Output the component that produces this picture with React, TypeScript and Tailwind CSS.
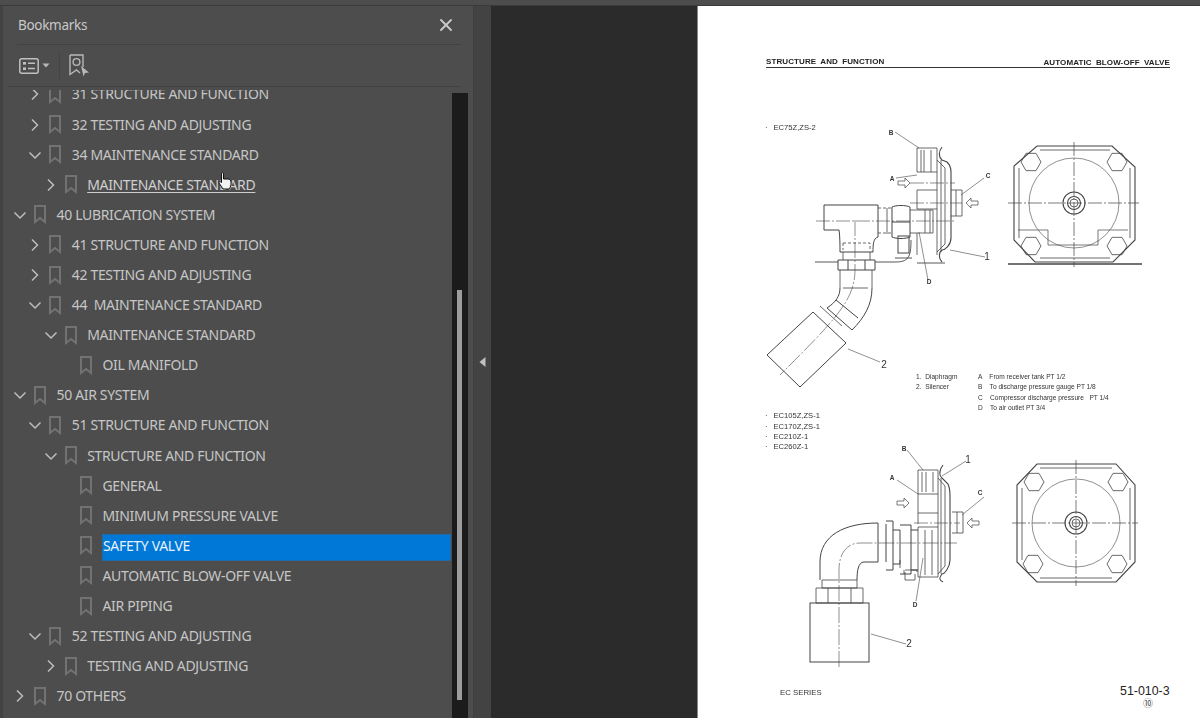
import { X } from "lucide-react";

type Row = { label: string; level: 0 | 1 | 2 | 3; chevron?: "right" | "down"; hover?: boolean; selected?: boolean };

const rows: Row[] = [
  { label: "31 STRUCTURE AND FUNCTION", level: 1, chevron: "right" },
  { label: "32 TESTING AND ADJUSTING", level: 1, chevron: "right" },
  { label: "34 MAINTENANCE STANDARD", level: 1, chevron: "down" },
  { label: "MAINTENANCE STANDARD", level: 2, chevron: "right", hover: true },
  { label: "40 LUBRICATION SYSTEM", level: 0, chevron: "down" },
  { label: "41 STRUCTURE AND FUNCTION", level: 1, chevron: "right" },
  { label: "42 TESTING AND ADJUSTING", level: 1, chevron: "right" },
  { label: "44  MAINTENANCE STANDARD", level: 1, chevron: "down" },
  { label: "MAINTENANCE STANDARD", level: 2, chevron: "down" },
  { label: "OIL MANIFOLD", level: 3 },
  { label: "50 AIR SYSTEM", level: 0, chevron: "down" },
  { label: "51 STRUCTURE AND FUNCTION", level: 1, chevron: "down" },
  { label: "STRUCTURE AND FUNCTION", level: 2, chevron: "down" },
  { label: "GENERAL", level: 3 },
  { label: "MINIMUM PRESSURE VALVE", level: 3 },
  { label: "SAFETY VALVE", level: 3, selected: true },
  { label: "AUTOMATIC BLOW-OFF VALVE", level: 3 },
  { label: "AIR PIPING", level: 3 },
  { label: "52 TESTING AND ADJUSTING", level: 1, chevron: "down" },
  { label: "TESTING AND ADJUSTING", level: 2, chevron: "right" },
  { label: "70 OTHERS", level: 0, chevron: "right" },
];

const indent = ["pl-[9px]", "pl-[24.3px]", "pl-[39.7px]", "pl-[55px]"];

function Chevron({ dir }: { dir?: "right" | "down" }) {
  return (
    <svg width="16" height="16" viewBox="0 0 16 16" fill="none" stroke="#bdbdbd" strokeWidth="1.5" className="shrink-0">
      {dir === "right" && <path d="M5 2.5 L10.5 8 L5 13.5" />}
      {dir === "down" && <path d="M2.5 5.5 L8 11 L13.5 5.5" />}
    </svg>
  );
}

function BookmarkIcon() {
  return (
    <svg width="12" height="19" viewBox="0 0 12 19" fill="none" stroke="#727272" strokeWidth="2" className="ml-[6px] mr-[10px] shrink-0">
      <path d="M1 1 H11 V17 L6 13 L1 17 Z" />
    </svg>
  );
}

function TreeRow({ row }: { row: Row }) {
  return (
    <div className={`flex h-[30.1px] items-center whitespace-pre ${indent[row.level]}`}>
      <Chevron dir={row.chevron} />
      <BookmarkIcon />
      <span
        className={
          row.selected
            ? "mt-[3px] flex h-[27px] w-[349px] items-center border border-dotted border-[#3d5d78] bg-[#0078d7] pb-[3px] text-[#e6f1fa]"
            : row.hover
              ? "pl-[0.5px] text-[#cfcfcf] underline underline-offset-2"
              : "pl-[0.5px] text-[#c6c6c6]"
        }
      >
        {row.label}
      </span>
    </div>
  );
}

function Hex({ x, y, r = 10 }: { x: number; y: number; r?: number }) {
  const pts = [0, 60, 120, 180, 240, 300]
    .map((a) => `${x + r * Math.cos((a * Math.PI) / 180)},${y + r * Math.sin((a * Math.PI) / 180)}`)
    .join(" ");
  return <polygon points={pts} />;
}

function Arrow({ x, y, dir }: { x: number; y: number; dir: 1 | -1 }) {
  const p = (dx: number, dy: number) => `${x + dx * dir},${y + dy}`;
  return <polygon points={[p(-6, -2), p(1, -2), p(1, -5), p(6, 0), p(1, 5), p(1, 2), p(-6, 2)].join(" ")} strokeWidth="0.7" />;
}

function Drawing() {
  return (
    <svg width="502" height="718" viewBox="698 0 502 718" fill="none" stroke="#444" strokeWidth="0.8" className="absolute inset-0 blur-[0.4px]">
      {/* top plan view */}
      <polygon points="1037,146 1112,146 1135,167 1135,240 1113,262 1035,262 1014,240 1014,166" strokeWidth="1.1" />
      <path d="M1019 168 V238 M1130 168 V238 M1040 150 H1110 M1040 258 H1110" />
      <circle cx="1074" cy="203" r="45" strokeWidth="0.6" />
      <circle cx="1074" cy="203" r="11" strokeWidth="1.1" />
      <circle cx="1074" cy="203" r="6.5" strokeWidth="1.1" />
      <circle cx="1074" cy="203" r="4" />
      <Hex x={1031} y={162} />
      <Hex x={1117} y={162} />
      <Hex x={1031} y={246} />
      <Hex x={1117} y={246} />
      <path d="M1018 230 H1048 V245 H1098 V230 H1128" strokeWidth="0.7" />
      <path d="M1008 203 H1139 M1074 142 V267" strokeDasharray="14 2 2 2" strokeWidth="0.7" />
      <path d="M1008 264 H1142" strokeWidth="1.3" />

      {/* top side view */}
      <path d="M917 148 V172 M917 190 V209 M917 233 V255 M917 148 H937 M937 148 V255 M921 150 V172 M924 150 V172 M931 150 V172 M917 172 H937 M917 190 H937 M917 209 H937 M925 210 V233 M930 210 V233" />
      <path d="M942 147 C938 152 939 158 942 160 L947 162 C950 165 951 168 951 172 L951 238 C951 245 945 250 942 250 C939 252 938 258 942 262" strokeWidth="1.1" />
      <path d="M937 160 L945 168 L945 244 L937 252 M941 160 V252 M951 190 H962 V216 H951 M956 190 V216" />
      <path d="M824 205 H878 V237 C873 238 873 246 873 252 H840 C840 246 840 236 839 230 H824 Z" strokeWidth="1" />
      <path d="M878 208 H891 M878 233 H891" strokeDasharray="3 2" />
      <path d="M892 207 C896 205 906 205 910 207 V237 C906 239 896 239 892 237 Z M892 222 H910" strokeWidth="1" />
      <path d="M887 208 V234 M910 210 H933 V233 H910" />
      <path d="M843 243 H870 V250 M843 243 V250" strokeDasharray="3 2" />
      <path d="M843 252 V260 M870 252 V260" />
      <path d="M838 260 H875 L875 270 H838 Z M848 260 V270 M865 260 V270" strokeWidth="1" />
      <path d="M840 270 V288 M872 270 V288 M843 288 H868" />
      <path d="M840 288 C840 296 836 302 827 308 M872 288 C872 305 864 318 852 330 M827 308 L852 330 M836 300 L858 318" strokeWidth="1" />
      <path d="M813 312 L846 343 L800 387 L767 355 Z" strokeWidth="1" />
      <path d="M820 306 L842 326" />
      <path d="M855 220 V270 C855 300 835 320 780 375" strokeDasharray="16 2 2 2" strokeWidth="0.6" />
      <path d="M816 221 H955 M910 183 H955 M910 203 H962" strokeDasharray="14 2 2 2" strokeWidth="0.6" />
      <path d="M815 262 H838 M875 262 H895 C908 262 911 258 911 240 M895 258 H912 M917 263 H945" strokeWidth="0.9" />
      <rect x="898" y="236" width="11" height="17" strokeWidth="1" />
      <path d="M895 132 L919 148 M896 178 L917 175 M984 178 L961 195 M928 280 L919 232 M985 257 L950 250 M848 349 L880 362" strokeWidth="0.6" />
      <Arrow x={904} y={183} dir={1} />
      <Arrow x={972} y={203} dir={-1} />

      {/* bottom plan view */}
      <polygon points="1037,464 1116,464 1135,485 1135,562 1116,582 1037,582 1017,562 1017,485" strokeWidth="1.1" />
      <path d="M1022 488 V560 M1130 488 V560 M1040 468 H1112 M1040 578 H1112" />
      <circle cx="1076" cy="523" r="44" strokeWidth="0.6" />
      <circle cx="1076" cy="523" r="11" strokeWidth="1.1" />
      <circle cx="1076" cy="523" r="6.5" strokeWidth="1.1" />
      <circle cx="1076" cy="523" r="4" />
      <Hex x={1034} y={482} />
      <Hex x={1118} y={482} />
      <Hex x={1033} y={564} />
      <Hex x={1117} y={564} />
      <path d="M1012 523 H1138 M1076 460 V586" strokeDasharray="14 2 2 2" strokeWidth="0.7" />

      {/* bottom side view */}
      <path d="M918 470 H938 V577 H918 V527 M918 470 V524 M922 472 V492 M926 472 V492 M933 472 V492 M918 494 H938 M918 513 H938 M918 527 H938 M925 530 V575 M932 530 V575" />
      <path d="M943 465 C939 470 939 476 942 478 L948 484 C950 488 950 492 950 496 L950 560 C950 568 944 574 942 574 C939 578 939 580 943 582" strokeWidth="1.1" />
      <path d="M938 478 L945 486 L945 566 L938 574 M941 478 V574 M952 512 H963 V533 H952 M957 512 V533" />
      <path d="M878 523 C845 523 820 535 820 562 V580 M878 562 H864 C858 562 857 572 857 580" strokeWidth="1" />
      <path d="M878 523 V562 M886 524 V562 M886 521 H893 V570 H886 M893 530 H900 V564 H893 M900 525 H911 V574 H900 M911 530 H918 M911 570 H918" strokeWidth="1" />
      <path d="M900 560 V568 M905 570 H917 V572 M904 574 V570 M905 572 V580 H915 V574" />
      <path d="M822 580 H857 V588 H822 Z" />
      <path d="M816 588 H863 V603 H816 Z M828 588 V603 M851 588 V603" />
      <rect x="810" y="603" width="59" height="59" strokeWidth="1" />
      <path d="M839 667 V570 C839 552 848 543 860 543 H957" strokeDasharray="16 2 2 2" strokeWidth="0.6" />
      <path d="M914 523 H960" strokeDasharray="14 2 2 2" strokeWidth="0.6" />
      <path d="M907 450 L923 470 M897 480 L918 494 M984 497 L962 515 M916 601 L923 558 M966 461 L942 476 M871 634 L906 644" strokeWidth="0.6" />
      <Arrow x={903} y={503} dir={1} />
      <Arrow x={973} y={523} dir={-1} />

      <g fill="#333" stroke="none" fontFamily="Liberation Sans, sans-serif" fontWeight="700" fontSize="6.5" textAnchor="middle">
        <text x="891" y="135">B</text>
        <text x="892" y="181">A</text>
        <text x="988" y="178">C</text>
        <text x="929" y="284">D</text>
        <text x="904" y="451">B</text>
        <text x="892" y="480">A</text>
        <text x="980" y="495">C</text>
        <text x="915" y="607">D</text>
      </g>
      <g fill="#333" stroke="none" fontFamily="Liberation Sans, sans-serif" fontSize="10" textAnchor="middle">
        <text x="987" y="260">1</text>
        <text x="884" y="368">2</text>
        <text x="968" y="463">1</text>
        <text x="909" y="647">2</text>
      </g>
    </svg>
  );
}

const legend = [
  { cls: "left-[916px] top-[373px]", text: "1.  Diaphragm" },
  { cls: "left-[916px] top-[383px]", text: "2.  Silencer" },
  { cls: "left-[978px] top-[373px]", text: "A    From receiver tank PT 1/2" },
  { cls: "left-[978px] top-[383px]", text: "B    To discharge pressure gauge PT 1/8" },
  { cls: "left-[978px] top-[393.5px]", text: "C    Compressor discharge pressure   PT 1/4" },
  { cls: "left-[978px] top-[404px]", text: "D    To air outlet PT 3/4" },
];

const models = [
  { cls: "top-[124px]", text: "EC75Z,ZS-2" },
  { cls: "top-[412px]", text: "EC105Z,ZS-1" },
  { cls: "top-[423px]", text: "EC170Z,ZS-1" },
  { cls: "top-[433px]", text: "EC210Z-1" },
  { cls: "top-[443px]", text: "EC260Z-1" },
];

export default function App() {
  return (
    <div className="flex h-[718px] w-[1200px] flex-col overflow-hidden bg-[#4a4a4a] font-['Noto_Sans',sans-serif]">
      <div className="relative z-10 h-[6px] shrink-0 border-b border-[#3a3a3a] bg-[#4d4d4d]" />
      <div className="relative flex min-h-0 flex-1">
        {/* bookmarks panel */}
        <aside className="relative flex w-[473px] shrink-0 flex-col border-l-[3px] border-[#434343] bg-[#4d4d4d]">
          <div className="ml-[14px] mr-[12px] flex h-[39px] shrink-0 items-center justify-between border-b border-[#424242] pl-px">
            <span className="text-[13.5px] tracking-[-0.3px] text-[#c8c8c8]">Bookmarks</span>
            <X size={20} strokeWidth={2.3} className="mr-[5px] text-[#c8c8c8]" />
          </div>
          <div className="ml-[5px] mr-[12px] flex h-[42px] shrink-0 items-center border-b border-[#424242] pl-[11px]">
            <svg width="20" height="16" viewBox="0 0 20 16" fill="none" stroke="#c0c0c0" strokeWidth="1.5">
              <rect x="0.8" y="0.8" width="18.4" height="14.4" rx="2" />
              <rect x="4" y="4" width="3" height="2.6" fill="#c0c0c0" stroke="none" />
              <rect x="4" y="9.4" width="3" height="2.6" fill="#c0c0c0" stroke="none" />
              <path d="M9 5.2 H16 M9 10.6 H16" />
            </svg>
            <svg width="8" height="5" viewBox="0 0 8 5" className="ml-[3px]">
              <path d="M0.5 0.5 H7.5 L4 4.5 Z" fill="#b8b8b8" />
            </svg>
            <div className="ml-[9px] h-[27px] w-px bg-[#444444]" />
            <svg width="21" height="23" viewBox="0 0 21 23" fill="none" stroke="#b8b8b8" strokeWidth="1.4" className="ml-[9px]">
              <path d="M1 1 H14 V13 M1 1 V20.5 L7.5 16 L11 19" />
              <circle cx="7.5" cy="8" r="3.4" />
              <path d="M12 12 L20 18.5 L16 19 L14.5 22.5 Z" fill="#b8b8b8" stroke="none" />
            </svg>
          </div>
          <div className="relative mt-[3px] min-h-0 flex-1">
            <div className="h-full overflow-hidden">
              <div className="mt-[-10.6px] text-[14px] leading-none tracking-[-0.34px]">
                {rows.map((row, i) => (
                  <TreeRow key={i} row={row} />
                ))}
              </div>
            </div>
            {/* scrollbar */}
            <div className="absolute bottom-0 left-[449px] top-[3px] w-[16px] bg-[#1b1b1b]">
              <div className="absolute left-[5px] top-[197px] h-[410px] w-[5px] bg-[#9c9c9c]" />
            </div>
            {/* hand cursor */}
            <svg width="14" height="18" viewBox="0 0 14 18" className="absolute left-[215px] top-[82px]">
              <path
                d="M3.5 1.5 C3.5 0.5 5.5 0.5 5.5 1.5 V7 H10 C12 7 13 8.5 13 10 V13 L11.5 17 H5 L1 11 C0.5 9.5 2 9 3.5 10.5 Z"
                fill="#f2f2f2"
                stroke="#111"
                strokeWidth="1"
              />
            </svg>
          </div>
        </aside>

        {/* collapse gutter */}
        <div className="flex w-[18px] shrink-0 items-center justify-center border-l border-[#3f3f3f] bg-[#434343] pb-[1px]">
          <svg width="7" height="10" viewBox="0 0 7 10">
            <path d="M6.5 0 V10 L0.5 5 Z" fill="#c0c0c0" />
          </svg>
        </div>

        {/* document area */}
        <div className="w-[207px] shrink-0 border-r border-[#888] bg-[#2b2b2b]" />
        <div className="relative w-[502px] shrink-0 bg-white" />
      </div>

      {/* scanned page: a free canvas in window coordinates */}
      <div className="absolute left-[698px] top-0 h-[718px] w-[502px] bg-white font-['Liberation_Sans',sans-serif] text-[#333]">
        <Drawing />
        <div className="absolute left-[68px] top-[57px] flex w-[404px] items-start justify-between border-b-[1.5px] border-[#333] text-[8px] font-bold leading-[9px] tracking-[0.1px] text-[#222] blur-[0.25px] [word-spacing:2px]">
          <span>STRUCTURE AND FUNCTION</span>
          <span className="mt-px">AUTOMATIC BLOW-OFF VALVE</span>
        </div>
        <div className="-ml-[698px] blur-[0.3px]">
          {legend.map((l) => (
            <span key={l.text} className={`absolute whitespace-pre text-[6.6px] leading-[8px] ${l.cls}`}>
              {l.text}
            </span>
          ))}
          {models.map((m) => (
            <div key={m.text} className={`absolute left-[765px] flex items-center text-[7.6px] leading-[8px] ${m.cls}`}>
              <span className="w-[8.5px]">·</span>
              <span>{m.text}</span>
            </div>
          ))}
        </div>
        <span className="absolute left-[82px] top-[687px] text-[7.8px] text-[#333] blur-[0.25px]">EC SERIES</span>
        <span className="absolute left-[422px] top-[685px] text-[12.4px] font-medium leading-[13px] text-[#222]">51-010-3</span>
        <span className="absolute left-[445px] top-[698px] font-['Noto_Sans_CJK_JP',sans-serif] text-[10px] leading-[10px] text-[#555]">⑩</span>
      </div>
    </div>
  );
}
